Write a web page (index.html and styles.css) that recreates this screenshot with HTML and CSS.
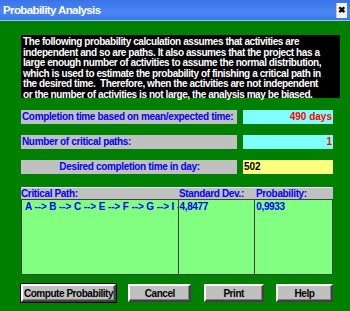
FILE: index.html
```html
<!DOCTYPE html>
<html lang="en">
<head>
    <meta charset="UTF-8">
    <title>Probability Analysis</title>
    <link rel="stylesheet" href="styles.css">
</head>
<body>
    <div class="window">
        <div class="titlebar">
            <span class="title">Probability Analysis</span>
            <span class="close">&#x2716;</span>
        </div>
        <div class="content">
            <div class="notice">
                The following probability calculation assumes that activities are<br>
                independent and so are paths. It also assumes that the project has a<br>
                large enough number of activities to assume the normal distribution,<br>
                which is used to estimate the probability of finishing a critical path in<br>
                the desired time.&nbsp; Therefore, when the activities are not independent<br>
                or the number of activities is not large, the analysis may be biased.
            </div>

            <div class="fields">
                <div class="label">Completion time based on mean/expected time:</div>
                <div class="value result">490 days</div>
                <div class="label">Number of critical paths:</div>
                <div class="value result">1</div>
                <div class="label centered">Desired completion time in day:</div>
                <div class="value input">502</div>
            </div>

            <div class="grid">
                <div class="grid-head">
                    <span class="col-path">Critical Path:</span>
                    <span class="col-dev">Standard Dev.:</span>
                    <span class="col-prob">Probability:</span>
                </div>
                <div class="grid-body">
                    <div class="col-path cell path">A --&gt; B --&gt; C --&gt; E --&gt; F --&gt; G --&gt; I --&gt; J</div>
                    <div class="col-dev cell">4,8477</div>
                    <div class="col-prob cell">0,9933</div>
                </div>
            </div>

            <div class="buttons">
                <button class="btn default btn-compute">Compute Probability</button>
                <button class="btn btn-cancel">Cancel</button>
                <button class="btn btn-print">Print</button>
                <button class="btn btn-help">Help</button>
            </div>
        </div>
    </div>
</body>
</html>
```

FILE: styles.css
```css
body {
    margin: 0;
    font-family: 'Liberation Sans', Arial, sans-serif;
    font-weight: bold;
    font-size: 10px;
    letter-spacing: -0.35px;
    white-space: nowrap;
}
.window {
    width: 350px;
    height: 311px;
    background: #008000;
    overflow: hidden;
}
.titlebar {
    height: 20px;
    display: flex;
    align-items: center;
    justify-content: space-between;
    padding: 0 2px 0 3px;
    background: linear-gradient(#3a73e6, #4a86f2 60%, #3d78ea);
    border-bottom: 1px solid #9cc0f8;
}
.title {
    color: white;
    font-size: 11.5px;
    letter-spacing: -0.6px;
}
.close {
    width: 10px;
    height: 15px;
    display: flex;
    align-items: center;
    justify-content: center;
    background: #f4f4ee;
    border-left: 1px solid #c8c8c0;
    font-size: 9px;
    letter-spacing: 0;
    color: black;
    margin-right: 1px;
}
.content {
    padding: 14px 17px 0 21px;
}
.notice {
    background: black;
    color: white;
    line-height: 10.5px;
    letter-spacing: -0.42px;
    padding: 2px 2px 1px 2px;
    height: 60px;
    margin-right: -7px;
}
.fields {
    display: grid;
    grid-template-columns: 216px 90px;
    column-gap: 6px;
    row-gap: 11px;
    margin-top: 12px;
}
.label {
    height: 14px;
    line-height: 14px;
    background: #c0c0c0;
    color: #0000ff;
    padding-left: 1px;
}
.label.centered {
    text-align: center;
}
.value {
    height: 14px;
    line-height: 14px;
    letter-spacing: 0;
}
.result {
    background: #80ffff;
    color: #ff0000;
    text-align: right;
    padding-right: 1px;
}
.input {
    background: #ffff80;
    color: black;
    padding-left: 1px;
}
.grid {
    margin-top: 13px;
    width: 312px;
    color: #0000ff;
}
.grid-head {
    display: flex;
    height: 11px;
    line-height: 11px;
    background: #c0c0c0;
    border-top: 1px solid #e8e8e8;
}
.grid-body {
    display: flex;
    height: 74px;
    background: #80ff80;
    border: 1px solid #404040;
}
.col-path {
    width: 158px;
}
.col-dev {
    width: 77px;
}
.col-prob {
    width: 77px;
}
.cell {
    padding: 1px 0 0 1px;
    box-sizing: border-box;
    overflow: hidden;
    border-right: 1px solid #404040;
}
.grid-body .col-path {
    width: 157px;
    padding-left: 3px;
}
.grid-body .col-prob {
    border-right: none;
}
.path {
    letter-spacing: -0.1px;
}
.buttons {
    display: flex;
    justify-content: space-between;
    margin-top: 9px;
    width: 312px;
}
.btn {
    height: 18px;
    padding: 0;
    font-family: inherit;
    font-weight: bold;
    font-size: 10px;
    letter-spacing: -0.45px;
    color: black;
    background: #c0c0c0;
    border: 2px solid;
    border-color: #ffffff #404040 #404040 #ffffff;
    box-shadow: inset -1px -1px 0 #808080;
}
.btn.default {
    outline: 1px solid black;
    outline-offset: 0;
}
.btn-compute { width: 95px; }
.btn-cancel { width: 63px; }
.btn-print { width: 60px; }
.btn-help { width: 57px; }
```
